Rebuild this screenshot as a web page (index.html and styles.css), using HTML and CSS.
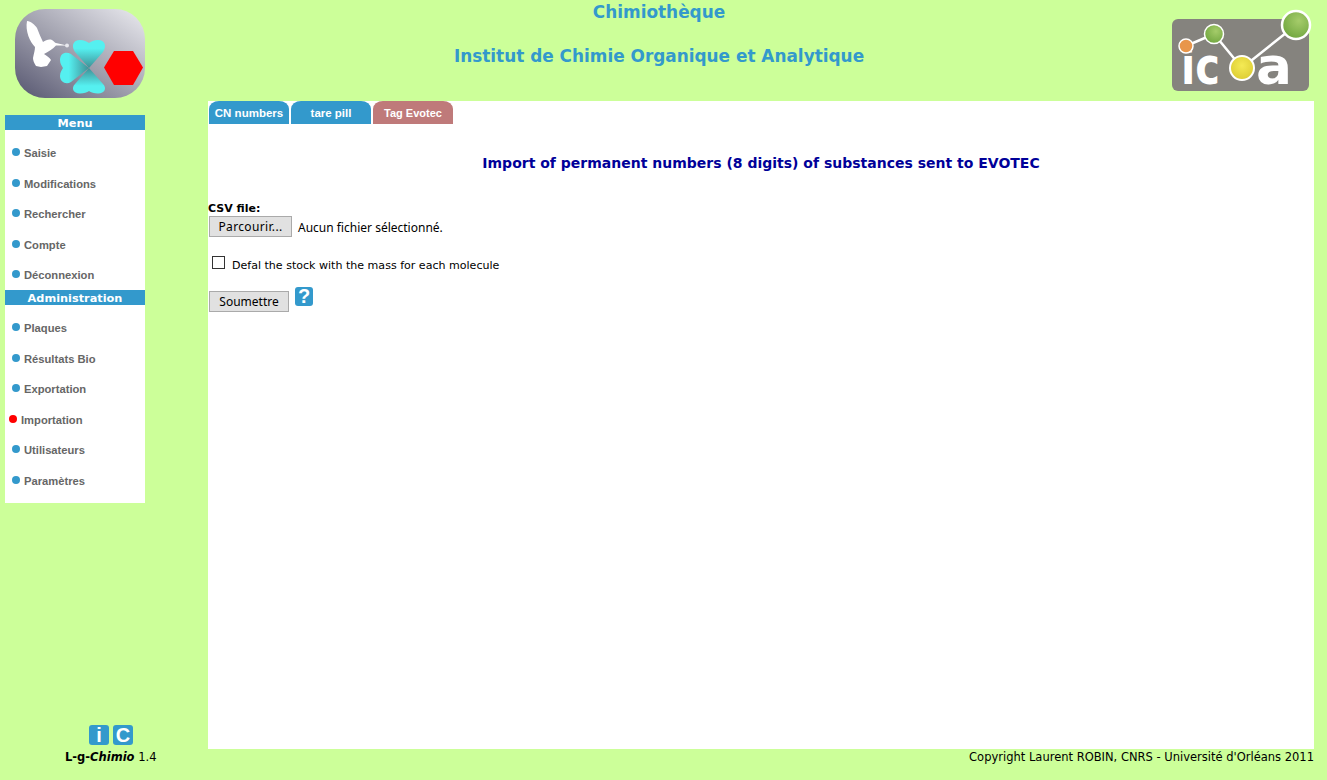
FILE: index.html
```html
<!DOCTYPE html>
<html lang="fr">
<head>
    <meta charset="UTF-8">
    <title>Chimiothèque</title>
    <link rel="stylesheet" href="styles.css">
</head>
<body>
    <header class="header">
        <svg class="logo-left" width="146" height="101" viewBox="0 0 146 101">
            <defs>
                <linearGradient id="logoBg" x1="0" y1="1" x2="1" y2="0">
                    <stop offset="0" stop-color="#55556f"/>
                    <stop offset="0.5" stop-color="#a3a3b0"/>
                    <stop offset="1" stop-color="#ebebf0"/>
                </linearGradient>
                <linearGradient id="heartTop" x1="0" y1="0" x2="0" y2="1">
                    <stop offset="0.3" stop-color="#55f0f0"/>
                    <stop offset="1" stop-color="#3f8f95"/>
                </linearGradient>
                <linearGradient id="heartBottom" x1="0" y1="1" x2="0" y2="0">
                    <stop offset="0.3" stop-color="#55f0f0"/>
                    <stop offset="1" stop-color="#3f8f95"/>
                </linearGradient>
                <linearGradient id="heartLeft" x1="0" y1="0" x2="1" y2="0">
                    <stop offset="0.3" stop-color="#55f0f0"/>
                    <stop offset="1" stop-color="#3f8f95"/>
                </linearGradient>
                <radialGradient id="ballGreen" cx="0.6" cy="0.35" r="0.7">
                    <stop offset="0" stop-color="#a5cc6a"/>
                    <stop offset="1" stop-color="#6fa53e"/>
                </radialGradient>
                <radialGradient id="ballYellow" cx="0.5" cy="0.4" r="0.7">
                    <stop offset="0" stop-color="#f4ea55"/>
                    <stop offset="1" stop-color="#d9c82e"/>
                </radialGradient>
            </defs>
            <rect x="15" y="9" width="130" height="89" rx="30" fill="url(#logoBg)"/>
            <path d="M27 21 C31 21 35 25 37 28 C39 33 41 38 43 42 C46 40 49 39 52 40 C54 41 55 43 56 43 L67 45.500 L56 45.500 C53 49 48 52 44 54 C47 56 50 58 51 60 L47 66 L41 67 L36 66 C34 63 33 60 33 58 C34 53 35 50 35 47 C30 42 25 31 27 21Z" fill="#fff"/>
            <circle cx="67" cy="45.500" r="2" fill="#e8e8ee"/>
            <path d="M89 68 L75 52 C71 46 73 40 80 40 C84 40 87 41.500 89 43 C91 41.500 94 40 98 40 C105 40 107 46 103 52Z" fill="url(#heartTop)"/>
            <path d="M89 68 L75 84 C71 88 73 93.500 80 93.500 C84 93.500 87 92.500 89 91 C91 92.500 94 93.500 98 93.500 C105 93.500 107 88 103 84Z" fill="url(#heartBottom)"/>
            <path d="M89 68 L71 54 C66 51 60 53 60 60 C60 64 62 66 63 68 C62 70 60 72 60 76 C60 82 66 85 71 82Z" fill="url(#heartLeft)"/>
            <polygon points="104,67.500 114,51 133,51 143,67.500 133,85 114,85" fill="#f00"/>
        </svg>
        <div class="titles">
            <h1>Chimiothèque</h1>
            <h1>Institut de Chimie Organique et Analytique</h1>
        </div>
        <svg class="logo-right" width="145" height="101" viewBox="1170 0 145 101">
            <rect x="1172" y="19" width="137" height="72" rx="6" fill="#85837e"/>
            <text class="logo-text" x="1181" y="84" textLength="39" lengthAdjust="spacingAndGlyphs">ic</text>
            <text class="logo-text" x="1256" y="84" textLength="36" lengthAdjust="spacingAndGlyphs">a</text>
            <polyline points="1186,46 1214,34 1242,68 1296,25" fill="none" stroke="#fff" stroke-width="2.500"/>
            <circle cx="1186" cy="46" r="7" fill="#e8964b" stroke="#fff" stroke-width="1.500"/>
            <circle cx="1214" cy="34" r="9.500" fill="url(#ballGreen)" stroke="#fff" stroke-width="1.500"/>
            <circle cx="1242" cy="68" r="12" fill="url(#ballYellow)" stroke="#fff" stroke-width="2"/>
            <circle cx="1296" cy="25" r="14" fill="url(#ballGreen)" stroke="#fff" stroke-width="2.500"/>
        </svg>
    </header>

    <div class="middle">
        <aside class="left-col">
            <nav class="sidebar">
                <div class="menu-title">Menu</div>
                <ul class="menu first">
                    <li><a href="#">Saisie</a></li>
                    <li><a href="#">Modifications</a></li>
                    <li><a href="#">Rechercher</a></li>
                    <li><a href="#">Compte</a></li>
                    <li><a href="#">Déconnexion</a></li>
                </ul>
                <div class="menu-title">Administration</div>
                <ul class="menu">
                    <li><a href="#">Plaques</a></li>
                    <li><a href="#">Résultats Bio</a></li>
                    <li><a href="#">Exportation</a></li>
                    <li class="current"><a href="#">Importation</a></li>
                    <li><a href="#">Utilisateurs</a></li>
                    <li><a href="#">Paramètres</a></li>
                </ul>
            </nav>
            <div class="small-icons">
                <span class="icon-box">i</span>
                <span class="icon-box">C</span>
            </div>
        </aside>

        <main class="content">
            <div class="tabs">
                <a class="tab" href="#">CN numbers</a>
                <a class="tab" href="#">tare pill</a>
                <a class="tab active" href="#">Tag Evotec</a>
            </div>
            <h2>Import of permanent numbers (8 digits) of substances sent to EVOTEC</h2>
            <form class="import-form">
                <label class="file-label">CSV file:</label>
                <div class="file-row">
                    <button type="button" class="btn browse">Parcourir...</button>
                    <span class="file-name">Aucun fichier sélectionné.</span>
                </div>
                <div class="check-row">
                    <input type="checkbox" id="defal">
                    <label for="defal">Defal the stock with the mass for each molecule</label>
                </div>
                <div class="submit-row">
                    <button type="button" class="btn submit">Soumettre</button>
                    <span class="icon-box help">?</span>
                </div>
            </form>
        </main>
    </div>

    <footer class="footer">
        <div class="version"><b>L-g-<i>Chimio</i></b> 1.4</div>
        <div class="copyright">Copyright Laurent ROBIN, CNRS - Université d'Orléans 2011</div>
    </footer>
</body>
</html>
```

FILE: styles.css
```css
* {
    box-sizing: border-box;
}

html, body {
    height: 100%;
}

body {
    margin: 0;
    background-color: #ccff99;
    font-family: "DejaVu Sans", sans-serif;
    color: #000;
    display: flex;
    flex-direction: column;
    overflow: hidden;
}

/* Header */
.header {
    height: 101px;
    display: flex;
    flex-shrink: 0;
}

.logo-left, .logo-right {
    flex-shrink: 0;
    display: block;
}

.logo-right {
    margin-right: 12px;
}

.logo-text {
    font-family: "DejaVu Sans", sans-serif;
    font-weight: bold;
    font-size: 52px;
    fill: #fff;
}

.titles {
    flex: 1;
    padding-left: 2px;
    text-align: center;
}

h1 {
    margin: 0;
    height: 44px;
    font-size: 16.900px;
    line-height: 24px;
    font-weight: bold;
    color: #3399cc;
}

/* Sidebar */
.middle {
    flex: 1;
    display: flex;
    min-height: 0;
}

.left-col {
    width: 208px;
    flex-shrink: 0;
    display: flex;
    flex-direction: column;
    justify-content: space-between;
}

.sidebar {
    width: 140px;
    margin: 14px 0 0 5px;
    background: #fff;
    padding-bottom: 7px;
}

.menu-title {
    height: 15px;
    background: #3399cc;
    color: #fff;
    font-size: 11.300px;
    font-weight: bold;
    line-height: 17px;
    text-align: center;
}

.menu {
    list-style: none;
    margin: 0;
    padding: 8px 0 0 0;
}

.menu.first {
    margin-bottom: -0.500px;
}

.menu li {
    height: 30.500px;
    line-height: 30.500px;
    display: flex;
    align-items: center;
    padding-left: 7px;
    font-family: "Liberation Sans", sans-serif;
    font-size: 11.200px;
    font-weight: bold;
}

.menu li::before {
    content: "";
    width: 8px;
    height: 8px;
    margin-right: 4px;
    margin-top: -2px;
    border-radius: 50%;
    background: #3399cc;
}

.menu li.current {
    padding-left: 4px;
}

.menu li.current::before {
    background: #f00;
}

.menu a {
    color: #666;
    text-decoration: none;
}

.small-icons {
    display: flex;
    gap: 4px;
    padding: 0 0 4px 89px;
}

.icon-box {
    width: 20px;
    height: 20px;
    border-radius: 3px;
    background: #3399cc;
    color: #fff;
    font-family: "Liberation Sans", sans-serif;
    font-weight: bold;
    font-size: 20px;
    line-height: 20px;
    text-align: center;
}

/* Main panel */
.content {
    width: 1106px;
    flex-shrink: 0;
    background: #fff;
}

.tabs {
    display: flex;
    gap: 2px;
    padding: 0 0 0 1px;
}

.tab {
    width: 80px;
    height: 23px;
    border-radius: 10px 10px 0 0 / 8px 8px 0 0;
    background: #3399cc;
    color: #fff;
    font-family: "Liberation Sans", sans-serif;
    font-size: 11.500px;
    font-weight: bold;
    line-height: 24px;
    text-align: center;
    text-decoration: none;
}

.tab.active {
    background: #bf7a7a;
    font-size: 11px;
}

h2 {
    margin: 30px 0 0 0;
    font-size: 14px;
    line-height: 18px;
    font-weight: bold;
    color: #000099;
    text-align: center;
}

.import-form {
    margin-top: 30px;
}

.file-label {
    display: block;
    font-size: 11px;
    font-weight: bold;
    line-height: 13px;
}

.file-row {
    display: flex;
    align-items: center;
    height: 22px;
    padding-left: 1px;
}

.btn {
    height: 21px;
    padding: 0;
    border: 1px solid #aaa;
    background: #e1e1e1;
    color: #000;
    font-family: "Noto Sans", sans-serif;
    font-size: 12px;
}

.browse {
    width: 83px;
    padding-top: 1px;
    letter-spacing: 0.350px;
}

.file-name {
    margin-left: 6px;
    padding-top: 2px;
    font-family: "Noto Sans", sans-serif;
    font-size: 12px;
}

.check-row {
    display: flex;
    align-items: center;
    height: 14px;
    margin-top: 18px;
    padding-left: 4px;
}

.check-row input {
    appearance: none;
    width: 13px;
    height: 13px;
    margin: 0 7px 0 0;
    border: 1px solid #333;
    background: #fff;
}

.check-row label {
    font-size: 11.050px;
    line-height: 14px;
    padding-top: 7px;
}

.submit-row {
    display: flex;
    align-items: flex-start;
    margin-top: 18px;
    padding-left: 1px;
}

.submit {
    width: 80px;
    margin-top: 4px;
}

.help {
    width: 18px;
    height: 19px;
    margin-left: 6px;
    line-height: 19px;
}

/* Footer */
.footer {
    height: 31px;
    flex-shrink: 0;
    display: flex;
    justify-content: space-between;
    padding: 1px 13px 0 65px;
    font-size: 11.500px;
    line-height: 15px;
}
```
